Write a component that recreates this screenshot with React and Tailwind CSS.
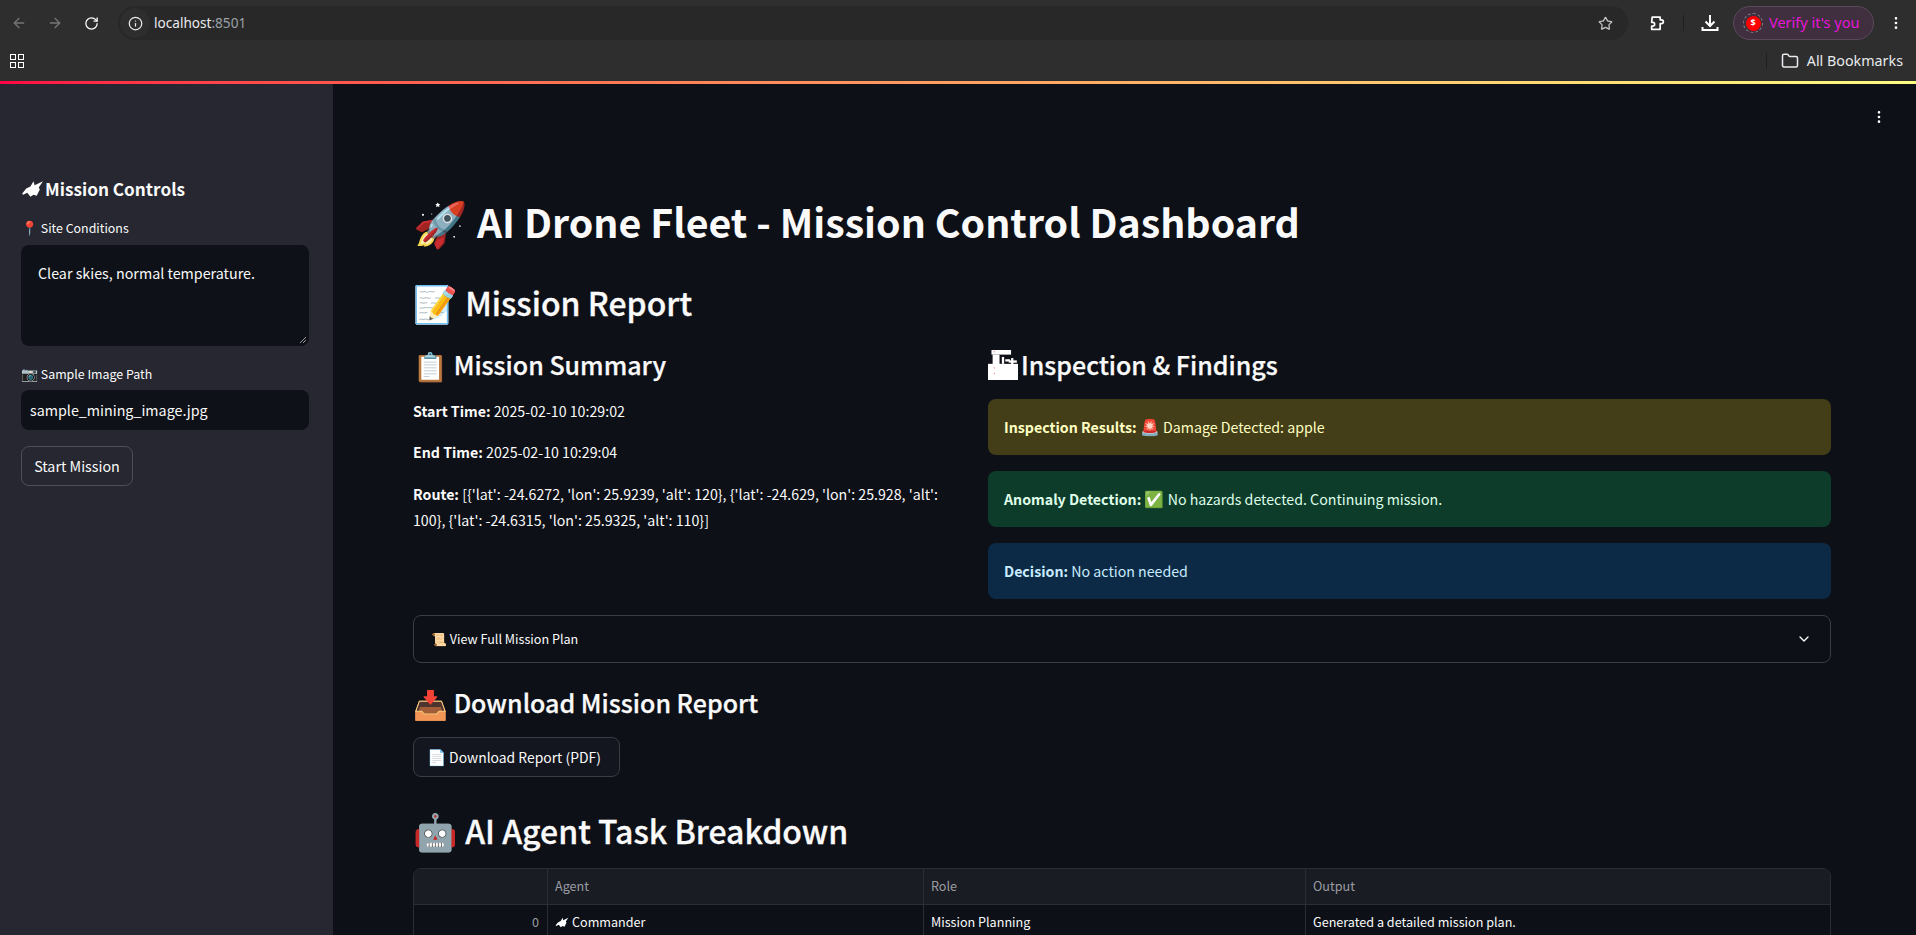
import { ChevronDown, Info, Star, RotateCw, ArrowLeft, ArrowRight, Folder, EllipsisVertical } from 'lucide-react';

// fallback glyphs the reference shows as white blobs, no emoji font has them
function JetGlyph({ className }) {
  return (
    <svg viewBox="5 6 22 17" className={className} fill="white">
      <polygon points="6,19 10,14 14,12 17,7 18,11 26,7 22,13 23,15 20,21 17,20 14,22 11,18 7,20" />
    </svg>
  );
}

function CraneGlyph() {
  return (
    <svg viewBox="0 0 26 26" className="mr-[3px] h-[30px] w-[30px] shrink-0">
      <rect x="0" y="12" width="26" height="14" fill="white" />
      <rect x="3" y="0" width="17" height="4" fill="white" />
      <rect x="4" y="4" width="6" height="9" fill="white" />
      <rect x="12" y="6" width="2" height="6" fill="white" />
      <rect x="15" y="8" width="4" height="2" fill="white" />
      <rect x="20" y="7" width="2" height="6" fill="white" />
      <rect x="18" y="9" width="7" height="2" fill="white" />
      <rect x="5" y="1" width="1" height="1" fill="#e88" />
      <rect x="5" y="15" width="1" height="1" fill="#e88" />
      <rect x="5" y="20" width="1" height="1" fill="#e88" />
    </svg>
  );
}

function PuzzleIcon() {
  return (
    <svg viewBox="0 0 16 16" className="ml-[21px] h-[17px] w-[17px]" fill="none" stroke="white" strokeWidth="1.6" strokeLinejoin="round">
      <path d="M3 2h7.5v2.5h1.2a1.8 1.8 0 0 1 0 3.6h-1.2v5.4H2.5v-3h1a1.8 1.8 0 0 0 0-3.6h-1z" />
    </svg>
  );
}

function DownloadIcon() {
  return (
    <svg viewBox="0 0 20 20" className="ml-[16px] h-[20px] w-[20px]" fill="none" stroke="white" strokeWidth="2">
      <path d="M10 2v11M5.5 8.5l4.5 4.5 4.5-4.5" />
      <path d="M2.5 14v3h15v-3" />
    </svg>
  );
}

// the emoji font sits bigger than the text next to it in the reference
function Emoji({ children }) {
  return <span className="text-[1.12em] leading-none">{children}</span>;
}

function Toolbar() {
  return (
    <div className="h-[81px] shrink-0 bg-[#2e2e2e] font-['Noto_Sans',sans-serif] text-[#e8eaed]">
      <div className="flex h-[41px] items-center pt-[5px]">
        <ArrowLeft size={16} className="ml-[11px] text-[#757575]" />
        <ArrowRight size={16} className="ml-[20px] text-[#757575]" />
        <RotateCw size={15} className="ml-[21px] text-white" />
        <div className="ml-[19px] flex h-[34px] w-[1510px] items-center rounded-full bg-[#282828]">
          <div className="ml-[2px] flex h-[30px] w-[30px] items-center justify-center rounded-full bg-[#2e2e2e]">
            <Info size={15} className="text-[#e8eaed]" />
          </div>
          <span className="ml-[4px] text-[13.6px] text-[#e8eaed]">localhost<span className="text-[#9aa0a6]">:8501</span></span>
          <Star size={15} className="ml-auto mr-[15px] text-[#c4c7c5]" />
        </div>
        <PuzzleIcon />
        <div className="ml-[17px] h-[16px] w-px bg-[#1f1f1f]" />
        <DownloadIcon />
        <div className="ml-[13px] flex h-[34px] w-[141px] items-center rounded-full border border-[#5a4a5a] bg-[#3f2f3f]">
          <div className="ml-[9px] flex h-[20px] w-[20px] items-center justify-center rounded-full border border-dashed border-[#888]">
            <div className="flex h-[15px] w-[15px] items-center justify-center rounded-full bg-[#ff0000] text-[9px] font-bold text-white">$</div>
          </div>
          <span className="ml-[6px] text-[14.5px] text-[#e815d8]">Verify it's you</span>
        </div>
        <EllipsisVertical size={16} className="ml-[14px] text-white" />
      </div>
      <div className="flex h-[40px] items-center">
        <div className="ml-[10px] grid h-[14px] w-[14px] grid-cols-2 gap-[2px]">
          <div className="border border-white" />
          <div className="border border-white" />
          <div className="border border-white" />
          <div className="border border-white" />
        </div>
        <div className="ml-auto h-[16px] w-px bg-[#1f1f1f]" />
        <Folder size={18} className="ml-[14px] text-[#e8eaed]" />
        <span className="ml-[8px] mr-[13px] text-[14.3px] text-[#e8eaed]">All Bookmarks</span>
      </div>
    </div>
  );
}

function Sidebar() {
  return (
    <div className="w-[333px] shrink-0 bg-[#262730] pl-[21px] pr-[24px] pt-[90px] text-[#fafafa]">
      <div className="flex h-[30px] items-center text-[17.2px] font-bold leading-[30px]">
        <JetGlyph className="mr-[1px] h-[18px] w-[23px]" />
        Mission Controls
      </div>
      <div className="mt-[14px] h-[20px] text-[12.4px] leading-[20px]"><Emoji>📍</Emoji> Site Conditions</div>
      <div className="relative mt-[7px] h-[101px] rounded-lg bg-[#0e1117] px-[17px] pt-[15px] text-[14.3px] leading-[26px]">
        Clear skies, normal temperature.
        <svg viewBox="0 0 8 8" className="absolute bottom-[2px] right-[2px] h-[8px] w-[8px]" stroke="#999" strokeWidth="1">
          <path d="M1 7L7 1M4 7L7 4" />
        </svg>
      </div>
      <div className="mt-[18px] h-[20px] text-[12.4px] leading-[20px]"><Emoji>📷</Emoji> Sample Image Path</div>
      <div className="mt-[6px] flex h-[40px] items-center rounded-lg bg-[#0e1117] px-[9px] text-[14.3px]">sample_mining_image.jpg</div>
      <div className="mt-[16px] flex h-[40px] w-[112px] items-center justify-center rounded-lg border border-[#4d4e58] text-[14.3px]">Start Mission</div>
    </div>
  );
}

function Alert({ bg, fg, label, emoji, text }) {
  return (
    <div className={`flex h-[56px] items-center rounded-lg px-[16px] pt-[1px] text-[14.2px] ${bg} ${fg}`}>
      <span><strong className="font-bold">{label}</strong> {emoji && <Emoji>{emoji}</Emoji>} {text}</span>
    </div>
  );
}

function AgentTable() {
  return (
    <div className="mt-[18px] overflow-hidden rounded-t-lg border border-[#2b2d35] text-[12.6px]">
      <div className="flex h-[36px] items-center border-b border-[#2b2d35] bg-[#1a1c24] text-[#9a9ca3]">
        <div className="h-full w-[134px] border-r border-[#2b2d35]" />
        <div className="flex h-full w-[376px] items-center border-r border-[#2b2d35] px-[7px]">Agent</div>
        <div className="flex h-full w-[382px] items-center border-r border-[#2b2d35] px-[7px]">Role</div>
        <div className="flex h-full flex-1 items-center px-[7px]">Output</div>
      </div>
      <div className="flex h-[35px] items-center text-[#fafafa]">
        <div className="flex h-full w-[134px] items-center justify-end border-r border-[#2b2d35] px-[8px] text-[#9a9ca3]">0</div>
        <div className="flex h-full w-[376px] items-center border-r border-[#2b2d35] px-[7px]">
          <JetGlyph className="mr-[3px] h-[11px] w-[14px]" />
          Commander
        </div>
        <div className="flex h-full w-[382px] items-center border-r border-[#2b2d35] px-[7px]">Mission Planning</div>
        <div className="flex h-full flex-1 items-center px-[7px]">Generated a detailed mission plan.</div>
      </div>
    </div>
  );
}

function Main() {
  return (
    <div className="relative min-w-0 flex-1 bg-[#0d1017] pl-[80px] pr-[85px] pt-[113px] text-[#fafafa]">
      <EllipsisVertical size={16} className="absolute right-[29px] top-[25px] text-white" />
      <h1 className="flex h-[48px] items-center text-[39.3px] font-bold"><Emoji>🚀</Emoji>&nbsp;AI Drone Fleet - Mission Control Dashboard</h1>
      <h2 className="mt-[37px] flex h-[40px] items-center text-[32px] font-medium [-webkit-text-stroke:0.3px_white]"><Emoji>📝</Emoji>&nbsp;Mission Report</h2>
      <div className="mt-[25px] flex gap-[16px]">
        <div className="w-[559px] shrink-0">
          <h3 className="flex h-[36px] items-center text-[25px] font-medium [-webkit-text-stroke:0.25px_white]"><Emoji>📋</Emoji>&nbsp;Mission Summary</h3>
          <p className="mt-[16px] text-[14.2px] leading-[25.6px]"><strong className="font-bold">Start Time:</strong> 2025-02-10 10:29:02</p>
          <p className="mt-[15px] text-[14.2px] leading-[25.6px]"><strong className="font-bold">End Time:</strong> 2025-02-10 10:29:04</p>
          <p className="mt-[17px] text-[14.2px] leading-[25.6px]"><strong className="font-bold">Route:</strong> [{"{"}'lat': -24.6272, 'lon': 25.9239, 'alt': 120{"}"}, {"{"}'lat': -24.629, 'lon': 25.928, 'alt': 100{"}"}, {"{"}'lat': -24.6315, 'lon': 25.9325, 'alt': 110{"}"}]</p>
        </div>
        <div className="min-w-0 flex-1">
          <h3 className="flex h-[36px] items-center text-[25px] font-medium [-webkit-text-stroke:0.25px_white]">
            <CraneGlyph />
            Inspection &amp; Findings
          </h3>
          <div className="mt-[16px] flex flex-col gap-[16px]">
            <Alert bg="bg-[#433e17]" fg="text-[#ffffc2]" label="Inspection Results:" emoji="🚨" text="Damage Detected: apple" />
            <Alert bg="bg-[#0d3d2a]" fg="text-[#dffde9]" label="Anomaly Detection:" emoji="✅" text="No hazards detected. Continuing mission." />
            <Alert bg="bg-[#0c2a45]" fg="text-[#c7ebff]" label="Decision:" text="No action needed" />
          </div>
        </div>
      </div>
      <div className="mt-[16px] flex h-[48px] items-center justify-between rounded-lg border border-[#3b3d45] pl-[17px] pr-[18px] text-[12.6px]">
        <span>📜 View Full Mission Plan</span>
        <ChevronDown size={16} />
      </div>
      <h3 className="mt-[22px] flex h-[36px] items-center text-[25px] font-medium [-webkit-text-stroke:0.25px_white]"><Emoji>📥</Emoji>&nbsp;Download Mission Report</h3>
      <div className="mt-[16px] flex h-[40px] w-[207px] items-center rounded-lg border border-[#3b3d45] bg-[#13161e] pl-[13px] text-[13.9px]"><span><Emoji>📄</Emoji> Download Report (PDF)</span></div>
      <h2 className="mt-[33px] flex h-[40px] items-center text-[32px] font-medium [-webkit-text-stroke:0.3px_white]"><Emoji>🤖</Emoji>&nbsp;AI Agent Task Breakdown</h2>
      <AgentTable />
    </div>
  );
}

export default function App() {
  return (
    <div className="flex h-screen flex-col overflow-hidden bg-[#0d1017] font-['Noto_Sans_CJK_SC',sans-serif]">
      <Toolbar />
      <div className="h-[3px] shrink-0 bg-gradient-to-r from-[#ff0044] to-[#fffd80]" />
      <div className="flex min-h-0 flex-1">
        <Sidebar />
        <Main />
      </div>
    </div>
  );
}
